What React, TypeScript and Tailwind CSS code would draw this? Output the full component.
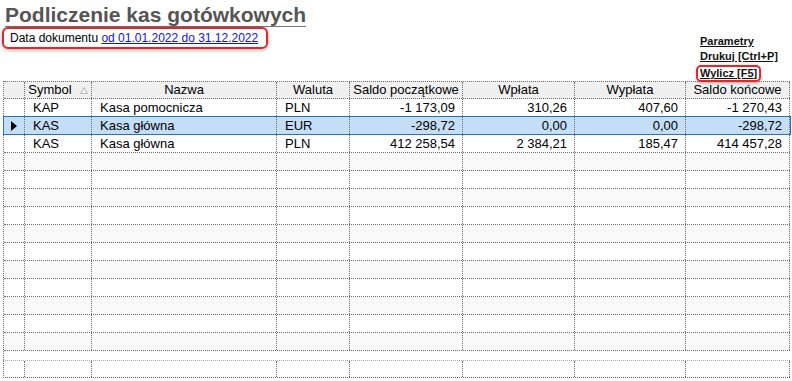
const GRID = 'grid grid-cols-[21px_67px_185px_73px_113px_112px_111px_1fr]'

interface Row {
  symbol: string
  nazwa: string
  waluta: string
  saldoP: string
  wplata: string
  wyplata: string
  saldoK: string
}

const rows: Row[] = [
  { symbol: 'KAP', nazwa: 'Kasa pomocnicza', waluta: 'PLN', saldoP: '-1 173,09', wplata: '310,26', wyplata: '407,60', saldoK: '-1 270,43' },
  { symbol: 'KAS', nazwa: 'Kasa główna', waluta: 'EUR', saldoP: '-298,72', wplata: '0,00', wyplata: '0,00', saldoK: '-298,72' },
  { symbol: 'KAS', nazwa: 'Kasa główna', waluta: 'PLN', saldoP: '412 258,54', wplata: '2 384,21', wyplata: '185,47', saldoK: '414 457,28' },
]

const SELECTED = 1
const TOTAL_ROWS = 14

const cell = 'border-r border-dotted border-[#6b6b6b] whitespace-nowrap overflow-hidden'
const left = `${cell} pl-[8px]`
const right = `${cell} pr-[7px] text-right`

const SortArrow = () => (
  <svg width="8" height="7" viewBox="0 0 8 7">
    <polygon points="4,0.5 7.5,6.5 0.5,6.5" fill="#f4f4f4" stroke="#b8b8b8" strokeWidth="1" />
  </svg>
)

const RowMarker = () => (
  <svg width="6" height="10" viewBox="0 0 6 10">
    <polygon points="0,0 6,5 0,10" fill="#000" />
  </svg>
)

export default function App() {
  const headers = ['Nazwa', 'Waluta', 'Saldo początkowe', 'Wpłata', 'Wypłata', 'Saldo końcowe']

  return (
    <div className="w-[792px] h-[381px] overflow-hidden bg-white text-black font-['Liberation_Sans',Arial,sans-serif]">
      {/* Top */}
      <div className="flex h-[81px]">
        <div className="flex flex-col items-start">
          <div className="ml-[5px] pt-[4px] leading-[22px] text-[21px] font-bold text-[#555555] border-b border-[#777777]">
            Podliczenie kas gotówkowych
          </div>
          <div className="ml-[2px] w-[266px] h-[22px] border-2 border-[#e4262c] rounded-[6px] shadow-[0_1px_4px_rgba(0,0,0,0.35)] pl-[6px] text-[12px] leading-[18px]">
            Data dokumentu{' '}
            <span className="text-[#1010ee] underline">od 01.01.2022 do 31.12.2022</span>
          </div>
        </div>

        <div className="ml-auto w-[92px] pt-[34px] flex flex-col items-start text-[11px] font-bold text-[#111111] leading-[15px]">
          <span className="underline">Parametry</span>
          <span className="underline">Drukuj [Ctrl+P]</span>
          <span className="-ml-[4px] mt-[1px] border-2 border-[#e4262c] rounded-[5px] px-[2px] leading-[13px] shadow-[0_1px_3px_rgba(0,0,0,0.3)]">
            <span className="underline">Wylicz [F5]</span>
          </span>
        </div>
      </div>

      {/* Grid */}
      <div className="ml-[3px] w-[787px] border-l border-dotted border-[#6b6b6b] text-[13px]">
        {/* Header */}
        <div className={`${GRID} h-[18px] leading-[16px] bg-[#f0f0f0] border-t border-b border-dotted border-[#6b6b6b]`}>
          <div className={cell} />
          <div className={`${cell} flex items-center justify-center gap-[8px]`}>
            <span>Symbol</span>
            <SortArrow />
          </div>
          {headers.map((h) => (
            <div key={h} className={`${cell} text-center`}>
              {h}
            </div>
          ))}
        </div>

        {/* Body */}
        {Array.from({ length: TOTAL_ROWS }).map((_, i) => {
          const r = rows[i]
          const selected = i === SELECTED
          const bg = selected ? 'bg-[#c4def6]' : i % 2 === 1 ? 'bg-[#fafafa]' : 'bg-white'
          return (
            <div
              key={i}
              className={`${GRID} relative h-[18px] leading-[17px] border-b border-dotted border-[#6b6b6b] ${bg}`}
            >
              <div className={`${cell} flex items-center pl-[7px]`}>{selected && <RowMarker />}</div>
              <div className={left}>{r?.symbol}</div>
              <div className={left}>{r?.nazwa}</div>
              <div className={left}>{r?.waluta}</div>
              <div className={right}>{r?.saldoP}</div>
              <div className={right}>{r?.wplata}</div>
              <div className={right}>{r?.wyplata}</div>
              <div className={right}>{r?.saldoK}</div>
              {selected && (
                <div className="absolute -top-px -left-px -right-px -bottom-px border border-[#1f73cc] pointer-events-none" />
              )}
            </div>
          )
        })}

        {/* Summary */}
        <div className={`${GRID} mt-[9px] -ml-px h-[18px] border-l border-t border-b border-dotted border-l-[#6b6b6b] border-t-[#a8a8a8] border-b-[#6b6b6b] bg-white`}>
          <div className={cell} />
          <div className={cell} />
          <div className={cell} />
          <div className={cell} />
          <div className={cell} />
          <div className={cell} />
          <div className={cell} />
          <div className={cell} />
        </div>
      </div>
    </div>
  )
}
